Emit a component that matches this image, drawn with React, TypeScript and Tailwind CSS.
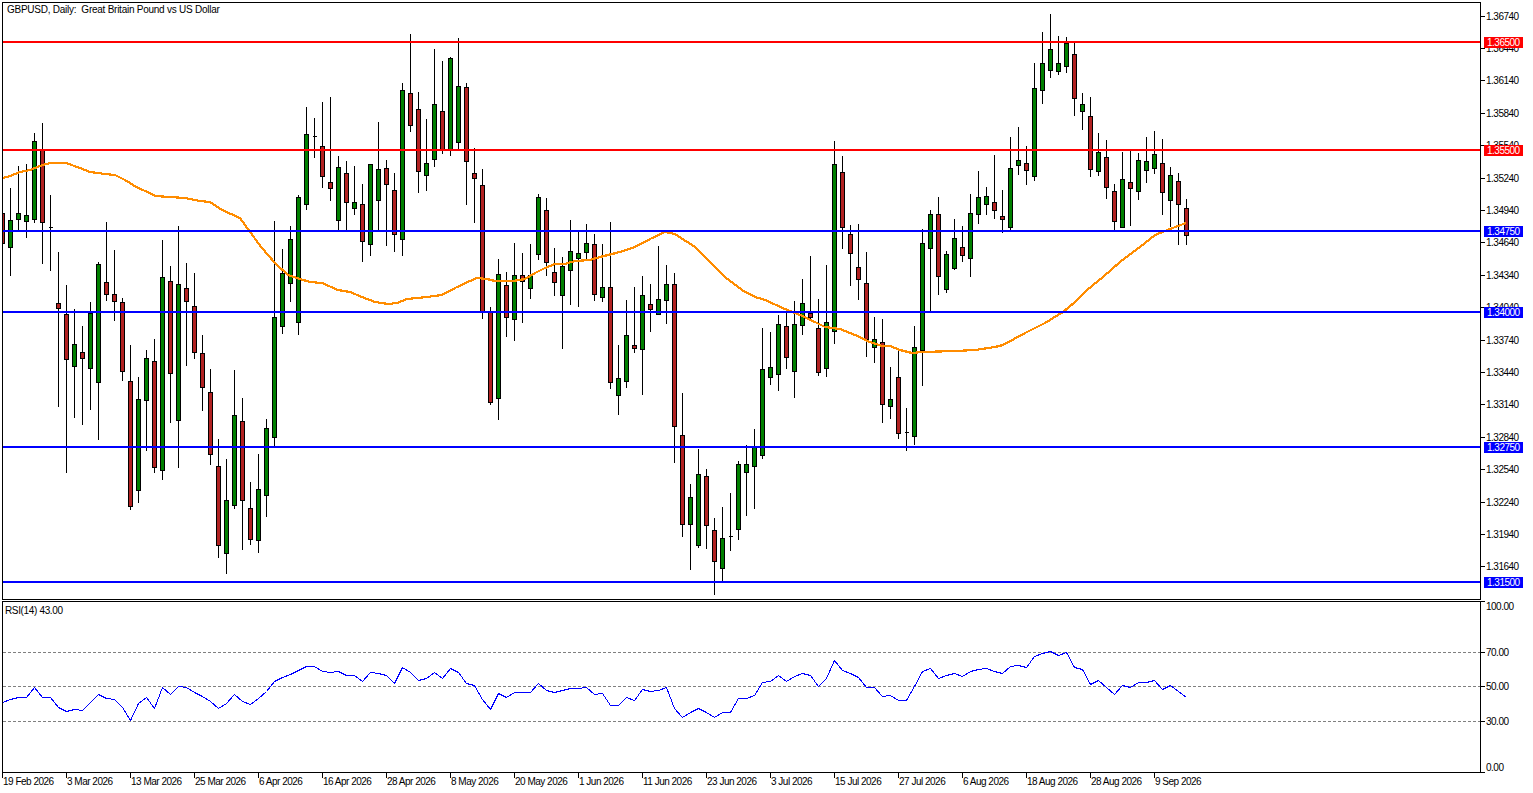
type Candle = [number, number, number, number, 'g' | 'r' | 'd']

// wick top, body top, body bottom, wick bottom (pixels), one bar every 8px from x=2
const candles: Candle[] = [
  [205,213,243,250,'r'],[188,220,247,275,'g'],[166,213,219,230,'g'],[164,215,221,237,'g'],[133,141,219,222,'g'],
  [123,150,222,263,'r'],[195,227,227,270,'d'],[252,303,308,406,'r'],[285,314,359,472,'r'],[309,344,366,417,'g'],
  [326,352,358,424,'r'],[302,313,368,409,'g'],[262,264,382,439,'g'],[222,282,294,300,'r'],[250,294,301,320,'r'],
  [298,302,371,380,'r'],[345,381,506,509,'r'],[377,399,490,502,'g'],[350,358,400,450,'g'],[339,361,467,472,'r'],
  [240,277,470,479,'g'],[266,281,373,422,'r'],[226,284,420,467,'g'],[263,288,301,365,'r'],[273,306,352,358,'r'],
  [335,353,387,410,'r'],[369,392,454,464,'r'],[439,466,545,557,'r'],[459,500,553,573,'g'],[370,415,505,508,'g'],
  [398,421,500,549,'r'],[482,508,539,544,'r'],[454,489,540,552,'g'],[419,428,495,516,'g'],[221,317,437,447,'g'],
  [249,273,326,333,'g'],[226,239,283,301,'g'],[195,197,322,334,'g'],[107,134,204,209,'g'],[118,136,136,157,'d'],
  [102,146,176,187,'r'],[97,182,188,200,'r'],[156,167,220,231,'g'],[161,173,202,231,'r'],[166,202,208,214,'g'],
  [184,204,241,261,'r'],[164,164,244,255,'g'],[122,169,200,231,'g'],[160,168,184,245,'r'],[173,190,234,251,'r'],
  [83,90,239,255,'g'],[34,93,125,131,'r'],[92,109,171,192,'r'],[119,163,175,190,'g'],[49,104,159,166,'g'],
  [61,111,149,153,'r'],[57,58,149,155,'g'],[38,86,142,148,'g'],[83,87,161,204,'r'],[148,173,178,222,'r'],
  [169,185,312,318,'r'],[307,312,402,404,'r'],[259,274,398,419,'g'],[272,285,317,336,'r'],[243,275,319,340,'g'],
  [253,275,281,322,'r'],[244,275,288,298,'g'],[194,197,254,259,'g'],[198,210,262,275,'r'],[248,272,282,295,'r'],
  [257,266,295,348,'g'],[220,251,270,304,'g'],[232,253,258,306,'g'],[224,243,252,260,'g'],[234,244,294,300,'r'],
  [244,287,297,301,'g'],[222,287,382,388,'r'],[345,378,395,414,'g'],[300,335,381,387,'g'],[287,345,348,352,'r'],
  [276,295,349,394,'g'],[284,304,309,331,'r'],[246,299,314,314,'g'],[265,284,300,323,'g'],[273,284,426,462,'r'],
  [393,435,524,536,'r'],[484,497,524,569,'g'],[449,474,545,547,'g'],[469,476,525,548,'r'],[518,530,561,594,'r'],
  [507,538,568,581,'g'],[493,536,536,550,'d'],[461,464,529,539,'g'],[445,464,472,515,'g'],[429,447,466,508,'g'],
  [328,369,455,458,'g'],[332,367,377,384,'g'],[315,324,374,390,'g'],[312,326,357,368,'r'],[301,324,371,397,'g'],
  [279,303,325,334,'g'],[256,313,317,319,'r'],[299,328,372,375,'r'],[265,322,368,376,'g'],[141,164,331,343,'g'],
  [156,172,227,248,'r'],[225,234,253,285,'r'],[224,267,279,299,'r'],[252,283,339,356,'r'],[317,339,347,362,'g'],
  [319,342,404,422,'r'],[367,399,406,418,'g'],[350,377,433,438,'r'],[408,432,432,450,'d'],[326,347,436,444,'g'],
  [229,243,350,385,'g'],[210,214,248,311,'g'],[197,214,276,294,'r'],[251,254,289,292,'g'],[219,238,268,269,'g'],
  [226,247,255,261,'r'],[194,213,258,276,'g'],[171,197,214,223,'g'],[187,196,204,214,'g'],[155,202,210,218,'r'],
  [190,216,219,232,'r'],[137,168,227,229,'g'],[127,160,165,174,'g'],[146,163,170,184,'r'],[63,88,176,180,'g'],
  [32,63,90,103,'g'],[14,49,70,77,'g'],[36,63,71,74,'g'],[37,43,66,72,'g'],[43,54,98,115,'r'],
  [93,104,111,129,'g'],[97,116,169,176,'r'],[133,152,171,175,'g'],[140,157,187,198,'r'],[184,191,221,231,'r'],
  [152,179,227,227,'g'],[150,182,188,225,'r'],[153,160,191,199,'g'],[137,161,170,182,'g'],[131,154,168,173,'g'],
  [139,163,192,214,'r'],[167,175,200,226,'g'],[173,181,204,244,'r'],[199,208,235,244,'r'],
]

const maLine =
  '3,178 10,176 20,172 30,170 40,166 50,163 66,163 80,168 90,172 105,174 115,175 125,180 138,188 150,193 155,196 170,197 185,198 200,201 210,202 222,210 240,218 250,232 262,248 275,263 288,275 300,279 310,282 322,283 338,290 350,292 362,297 375,302 388,304 397,303 407,299 417,298 427,297 442,295 455,288 470,281 477,278 487,279 495,281 513,281 525,279 535,273 545,268 555,264 565,264 575,261 590,260 600,257 620,252 635,247 650,239 665,232 675,234 695,247 710,262 725,277 742,290 755,297 765,300 785,309 800,315 815,322 825,327 840,329 855,335 870,342 882,346 890,346 900,350 912,353 922,352 955,351 975,350 995,347 1003,345 1025,333 1045,323 1063,312 1075,302 1087,290 1103,277 1120,262 1140,247 1155,235 1170,229 1186,223'

const rsi = [
  702,699,697,697,687,697,697,707,711,709,710,702,694,698,699,707,720,703,697,708,687,694,686,687,692,696,701,708,703,694,701,704,698,691,681,677,674,670,666,666,671,672,671,675,675,681,672,673,675,683,667,672,680,678,672,678,668,672,683,685,699,709,693,697,692,692,692,683,690,692,690,688,688,687,694,693,705,705,
  697,700,689,691,690,687,708,717,712,708,712,717,712,712,698,698,695,682,681,675,681,676,673,675,686,678,660,670,673,677,687,687,696,695,700,700,686,671,668,678,675,673,676,671,669,668,671,673,666,665,667,656,653,651,655,652,667,669,684,680,687,694,685,687,682,682,680,689,685,691,697,
]

const levels = [
  { price: '1.36500', y: 42, line: '#ff0000', tag: 'bg-[#ff0000]' },
  { price: '1.35500', y: 150, line: '#ff0000', tag: 'bg-[#ff0000]' },
  { price: '1.34750', y: 231, line: '#0000ff', tag: 'bg-[#0000ff]' },
  { price: '1.34000', y: 312, line: '#0000ff', tag: 'bg-[#0000ff]' },
  { price: '1.32750', y: 447, line: '#0000ff', tag: 'bg-[#0000ff]' },
  { price: '1.31500', y: 582, line: '#0000ff', tag: 'bg-[#0000ff]' },
]

const prices = [
  '1.36740','1.36440','1.36140','1.35840','1.35540','1.35240','1.34940','1.34640','1.34340',
  '1.34040','1.33740','1.33440','1.33140','1.32840','1.32540','1.32240','1.31940','1.31640',
]

const dates = [
  '19 Feb 2026','3 Mar 2026','13 Mar 2026','25 Mar 2026','6 Apr 2026','16 Apr 2026','28 Apr 2026','8 May 2026','20 May 2026','1 Jun 2026',
  '11 Jun 2026','23 Jun 2026','3 Jul 2026','15 Jul 2026','27 Jul 2026','6 Aug 2026','18 Aug 2026','28 Aug 2026','9 Sep 2026',
]

const fills = { g: '#008000', r: '#b22222', d: '#000000' }

function PriceChart() {
  return (
    <svg className="block h-full w-full" viewBox="3 3 1477 596" shapeRendering="crispEdges">
      {candles.map(([top, a, b, low, c], i) => {
        const x = 2 + 8 * i + 0.5
        return (
          <g key={i} stroke="#000" strokeWidth={1}>
            <path d={`M${x} ${top}V${low + 1}`} fill="none" />
            <path d={`M${x - 2} ${a + 0.5}h4v${b - a}h-4z`} fill={fills[c]} />
          </g>
        )
      })}
      <polyline points={maLine} fill="none" stroke="#ff8c00" strokeWidth={2.2} />
      {levels.map((l) => (
        <line key={l.price} x1={3} x2={1480} y1={l.y} y2={l.y} stroke={l.line} strokeWidth={2} />
      ))}
    </svg>
  )
}

function RsiChart() {
  const line = rsi.map((y, i) => `${2 + 8 * i + 0.5},${y + 0.5}`).join(' ')
  return (
    <svg className="block h-full w-full" viewBox="3 602 1477 170" shapeRendering="crispEdges">
      {[652, 686, 721].map((y) => (
        <line key={y} x1={3} x2={1480} y1={y + 0.5} y2={y + 0.5} stroke="#808080" strokeWidth={1} strokeDasharray="3 2" />
      ))}
      <polyline points={line} fill="none" stroke="#0000ff" strokeWidth={1} />
    </svg>
  )
}

function PriceAxis() {
  return (
    <div className="relative w-[50px]">
      <div className="-mt-[2.2px] flex flex-col">
        {prices.map((p) => (
          <div key={p} className="flex h-[32.41px] items-center">
            <span className="h-px w-[4px] bg-black" />
            <span className="ml-[1px]">{p}</span>
          </div>
        ))}
      </div>
      {levels.map((l) => (
        <div
          key={l.price}
          className={`absolute left-[3px] flex h-[11px] w-[39px] items-center pl-[3px] text-white ${l.tag}`}
          style={{ top: l.y - 7 }}
        >
          {l.price}
        </div>
      ))}
    </div>
  )
}

function RsiAxis() {
  return (
    <div className="grid h-[172px] w-[50px] grid-rows-5">
      <div className="flex items-start">
        <span className="h-px w-[4px] bg-black" />
        <span className="ml-[1px] leading-[11px]">100.00</span>
      </div>
      <div className="flex items-center">
        <span className="h-px w-[4px] bg-black" />
        <span className="ml-[1px]">70.00</span>
      </div>
      <div className="flex items-center">
        <span className="h-px w-[4px] bg-black" />
        <span className="ml-[1px]">50.00</span>
      </div>
      <div className="flex items-center">
        <span className="h-px w-[4px] bg-black" />
        <span className="ml-[1px]">30.00</span>
      </div>
      <div className="flex items-end">
        <span className="h-px w-[4px] bg-black" />
        <span className="ml-[1px] leading-[11px]">0.00</span>
      </div>
    </div>
  )
}

export default function App() {
  return (
    <div className="h-[793px] w-[1533px] overflow-hidden bg-white pl-[2px] pt-[2px] text-[10px] leading-[11px] tracking-[-0.5px] text-black [font-family:'Liberation_Sans',sans-serif]">
      <div className="flex">
        <div className="relative h-[598px] w-[1479px] border border-black">
          <PriceChart />
          <div className="absolute left-[4px] top-[1px] tracking-[-0.25px] whitespace-pre">GBPUSD, Daily:  Great Britain Pound vs US Dollar</div>
        </div>
        <PriceAxis />
      </div>

      <div className="mt-[1px] flex">
        <div className="relative h-[172px] w-[1479px] border border-black">
          <RsiChart />
          <div className="absolute left-[2px] top-[3px] tracking-[-0.35px]">RSI(14) 43.00</div>
        </div>
        <RsiAxis />
      </div>

      <div className="flex">
        {dates.map((d) => (
          <div key={d} className="flex w-[64px] flex-col">
            <span className="h-[5px] w-px bg-black" />
            <span className="-mt-[2px] pl-[1px] whitespace-nowrap">{d}</span>
          </div>
        ))}
      </div>
    </div>
  )
}
